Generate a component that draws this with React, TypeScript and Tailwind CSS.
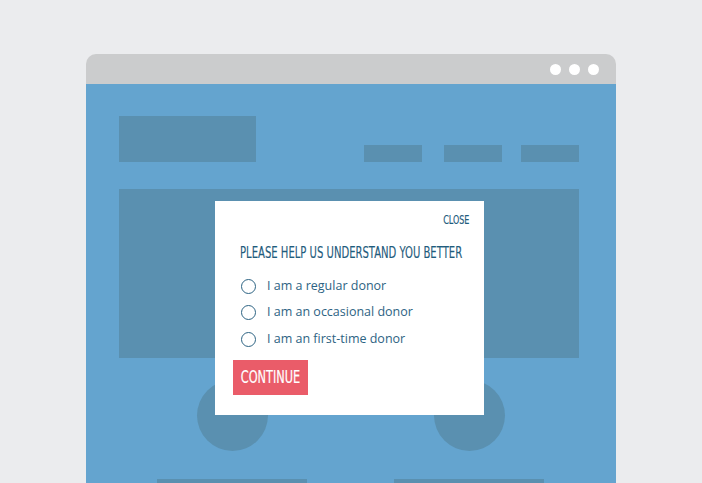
export default function App() {
  const options = ["I am a regular donor", "I am an occasional donor", "I am an first-time donor"];
  const narrow = { fontFamily: '"DejaVu Sans Condensed", "DejaVu Sans", sans-serif' };

  return (
    <div className="w-[702px] h-[483px] overflow-hidden bg-[#ebecee] pt-[54px] pl-[86px]">
      {/* Browser window */}
      <div className="relative w-[530px]">
        <div className="h-[30px] rounded-t-[10px] bg-[#cbcccd] flex items-center justify-end gap-[8px] pr-[17px]">
          <span className="w-[11px] h-[11px] rounded-full bg-white" />
          <span className="w-[11px] h-[11px] rounded-full bg-white" />
          <span className="w-[11px] h-[11px] rounded-full bg-white" />
        </div>

        <div className="bg-[#64a4cf] h-[420px] pt-[32px] px-[33px]">
          {/* Header */}
          <div className="w-[460px] flex items-end">
            <div className="w-[137px] h-[46px] bg-[#5a90b0]" />
            <div className="ml-auto flex items-end">
              <div className="w-[58px] h-[17px] bg-[#5a90b0]" />
              <div className="w-[58px] h-[17px] bg-[#5a90b0] ml-[22px]" />
              <div className="w-[58px] h-[17px] bg-[#5a90b0] ml-[19px]" />
            </div>
          </div>

          {/* Hero */}
          <div className="mt-[27px] w-[460px] h-[169px] bg-[#5a90b0]" />

          {/* Features */}
          <div className="mt-[22px] flex pl-[38px] gap-[87px]">
            {[0, 1].map((i) => (
              <div key={i} className="w-[150px] flex flex-col items-center gap-[28px]">
                <div className="w-[71px] h-[71px] rounded-full bg-[#5a90b0]" />
                <div className="w-[150px] h-[20px] bg-[#5a90b0]" />
              </div>
            ))}
          </div>
        </div>

        {/* Modal */}
        <div className="absolute left-[129px] top-[147px] w-[269px] h-[214px] bg-white flex flex-col px-[18px]">
          <div className="flex justify-end pt-[12px]">
            <span
              className="inline-block origin-right scale-x-[0.74] mr-[-3px] text-[12px] leading-[15px] text-[#1f5c7d] [-webkit-text-stroke:0.2px_#1f5c7d]"
              style={narrow}
            >
              CLOSE
            </span>
          </div>
          <div className="mt-[12px] ml-[7px] h-[18px] whitespace-nowrap">
            <h2
              className="inline-block origin-left scale-x-[0.745] text-[15px] leading-[18px] text-[#1f5c7d] [-webkit-text-stroke:0.15px_#1f5c7d]"
              style={narrow}
            >
              PLEASE HELP US UNDERSTAND YOU BETTER
            </h2>
          </div>
          <div className="mt-[15px] ml-[8px] flex flex-col">
            {options.map((o) => (
              <label key={o} className="flex items-center h-[26.5px]">
                <span className="w-[15px] h-[15px] rounded-full border-[1.5px] border-[#2d6383]" />
                <span
                  className="ml-[11px] text-[12.5px] text-[#2d6383]"
                  style={{ fontFamily: '"Open Sans", sans-serif' }}
                >
                  {o}
                </span>
              </label>
            ))}
          </div>
          <button className="mt-[7px] w-[75px] h-[35px] bg-[#ea5c69] flex items-center justify-center">
            <span
              className="inline-block scale-x-[0.7] text-white text-[18px] leading-[20px] [-webkit-text-stroke:0.2px_#ffffff]"
              style={narrow}
            >
              CONTINUE
            </span>
          </button>
        </div>
      </div>
    </div>
  );
}
